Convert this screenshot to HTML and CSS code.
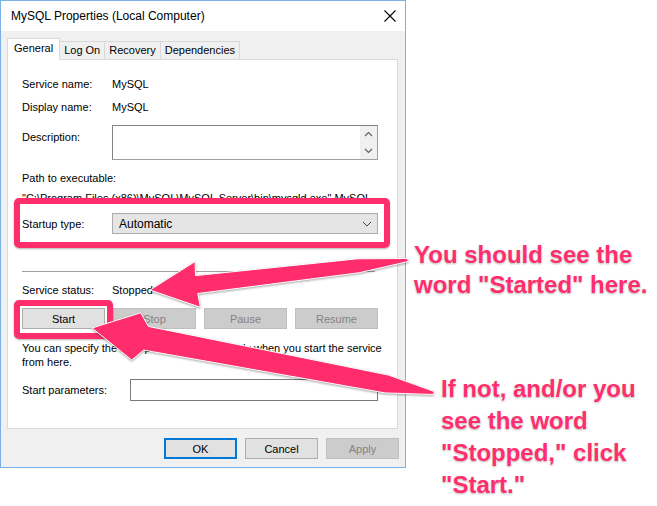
FILE: index.html
```html
<!DOCTYPE html>
<html lang="en">
<head>
<meta charset="utf-8">
<title>MySQL Properties (Local Computer)</title>
<link rel="stylesheet" href="styles.css">
</head>
<body>
<div class="stage">
  <!-- The service properties window -->
  <div class="dialog">
    <div class="titleBar">
      <span class="titleText">MySQL Properties (Local Computer)</span>
      <svg class="closeIcon" width="12" height="12" viewBox="0 0 12 12"><path d="M0.5 0.5L11.5 11.5M11.5 0.5L0.5 11.5" stroke="#000" stroke-width="1.1" fill="none"/></svg>
    </div>
    <div class="dialogBody">
      <div class="tabRow">
        <div class="tab tabSelected">General</div>
        <div class="tab">Log On</div>
        <div class="tab">Recovery</div>
        <div class="tab">Dependencies</div>
      </div>
      <div class="tabPanel">
        <div class="fieldRow"><span class="fieldLabel">Service name:</span><span>MySQL</span></div>
        <div class="fieldRow"><span class="fieldLabel">Display name:</span><span>MySQL</span></div>
        <div class="descRow">
          <span class="fieldLabel descLabel">Description:</span>
          <div class="descBox">
            <div class="scrollStrip">
              <svg width="9" height="6" viewBox="0 0 9 6"><path d="M1 5L4.5 1.5L8 5" stroke="#606060" stroke-width="1.2" fill="none"/></svg>
              <svg width="9" height="6" viewBox="0 0 9 6"><path d="M1 1L4.5 4.5L8 1" stroke="#606060" stroke-width="1.2" fill="none"/></svg>
            </div>
          </div>
        </div>
        <div class="pathLabel">Path to executable:</div>
        <div class="pathText">"C:\Program Files (x86)\MySQL\MySQL Server\bin\mysqld.exe" MySQL</div>
        <div class="startupRow">
          <span class="fieldLabel">Startup type:</span>
          <div class="comboBox">
            <span>Automatic</span>
            <svg width="10" height="6" viewBox="0 0 10 6"><path d="M1 1L5 5L9 1" stroke="#444" stroke-width="1" fill="none"/></svg>
          </div>
        </div>
        <div class="separator"></div>
        <div class="statusRow"><span class="fieldLabel">Service status:</span><span>Stopped</span></div>
        <div class="controlButtons">
          <div class="winButton">Start</div>
          <div class="winButton disabled">Stop</div>
          <div class="winButton disabled">Pause</div>
          <div class="winButton disabled">Resume</div>
        </div>
        <div class="noteText">You can specify the start parameters that apply when you start the service<br>from here.</div>
        <div class="paramRow">
          <span class="paramLabel">Start parameters:</span>
          <div class="paramInput"></div>
        </div>
      </div>
      <div class="dialogButtons">
        <div class="winButton dlgButton defaultButton">OK</div>
        <div class="winButton dlgButton">Cancel</div>
        <div class="winButton dlgButton disabled">Apply</div>
      </div>
    </div>
  </div>

  <!-- Annotations drawn on top of the screenshot -->
  <div class="highlight startupHighlight"></div>
  <div class="highlight startHighlight"></div>
  <svg class="arrows" width="657" height="506" viewBox="0 0 657 506">
    <path d="M150 290L195 261.6L195.6 275.6L357.8 258.8L407.8 258.5L408.2 261.5L359.4 272.7L197.8 293.5L200.4 307.3Z"/>
    <path d="M92 328L140.7 312.8L148.3 326.4L388.7 375.1L434.2 391.5L433.6 394.5L385 392.9L143.8 350.1L131.7 360Z"/>
  </svg>
  <div class="callout calloutTop">You should see the<br>word "Started" here.</div>
  <div class="callout calloutBottom">If not, and/or you<br>see the word<br>"Stopped," click<br>"Start."</div>
</div>
</body>
</html>
```

FILE: styles.css
```css
  body {
    margin: 0;
    background-color: #fff;
    font-family: "Liberation Sans", Arial, sans-serif;
    font-size: 11px;
    color: #000;
  }
  .stage {
    position: relative;
    width: 657px;
    height: 506px;
    overflow: hidden;
  }
  .dialog {
    width: 406px;
    height: 468px;
    box-sizing: border-box;
    border: 1px solid #7ab1e7;
    background-color: #f0f0f0;
    display: flex;
    flex-direction: column;
  }
  .titleBar {
    height: 30px;
    background-color: #fff;
    display: flex;
    align-items: center;
    justify-content: space-between;
    padding: 0 9px 0 10px;
  }
  .titleText {
    font-size: 12px;
  }
  .dialogBody {
    padding: 7px 7px 0 6px;
  }
  .tabRow {
    display: flex;
    align-items: flex-end;
  }
  .tab {
    box-sizing: border-box;
    height: 18px;
    padding: 1px 4px 0;
    line-height: 14px;
    border: 1px solid #d9d9d9;
    border-bottom: none;
    margin-left: -1px;
    background-color: #f0f0f0;
  }
  .tabSelected {
    height: 22px;
    padding: 2px 6px 0;
    margin-left: 0;
    margin-bottom: -1px;
    background-color: #fff;
    position: relative;
    z-index: 1;
  }
  .tabPanel {
    background-color: #fff;
    border: 1px solid #d9d9d9;
    padding: 12px 0 27px 14px;
  }
  .fieldRow {
    display: flex;
    align-items: center;
    height: 23px;
  }
  .fieldLabel {
    width: 90px;
    flex: none;
    line-height: 14px;
  }
  .descRow {
    display: flex;
    align-items: flex-start;
    margin-top: 7px;
  }
  .descLabel {
    padding-top: 5px;
  }
  .descBox {
    width: 266px;
    height: 35px;
    box-sizing: border-box;
    border: 1px solid #a0a0a0;
    border-left-color: #828282;
    border-top-color: #828282;
    display: flex;
    justify-content: flex-end;
  }
  .scrollStrip {
    width: 17px;
    background-color: #f0f0f0;
    display: flex;
    flex-direction: column;
    align-items: center;
    justify-content: space-between;
    padding: 5px 0 5px;
  }
  .pathLabel {
    margin-top: 11px;
    line-height: 14px;
  }
  .pathText {
    margin-top: 6px;
    line-height: 14px;
    width: 356px;
    white-space: nowrap;
    overflow: hidden;
  }
  .startupRow {
    display: flex;
    align-items: center;
    margin-top: 8px;
  }
  .comboBox {
    width: 266px;
    height: 21px;
    box-sizing: border-box;
    background-color: #e5e5e5;
    border: 1px solid #acacac;
    display: flex;
    align-items: center;
    justify-content: space-between;
    padding: 0 5px 0 6px;
    font-size: 12px;
  }
  .separator {
    margin-top: 37px;
    width: 353px;
    height: 1px;
    background-color: #a0a0a0;
  }
  .statusRow {
    display: flex;
    margin-top: 11px;
    line-height: 14px;
  }
  .controlButtons {
    display: grid;
    grid-template-columns: repeat(4, 83px);
    column-gap: 8px;
    margin-top: 11px;
  }
  .winButton {
    box-sizing: border-box;
    height: 21px;
    background-color: #e1e1e1;
    border: 1px solid #adadad;
    display: flex;
    align-items: center;
    justify-content: center;
  }
  .winButton.disabled {
    background-color: #cccccc;
    border-color: #bfbfbf;
    color: #838383;
  }
  .noteText {
    margin-top: 12px;
    line-height: 14px;
    white-space: nowrap;
  }
  .paramRow {
    display: flex;
    align-items: center;
    margin-top: 10px;
  }
  .paramLabel {
    width: 108px;
    flex: none;
  }
  .paramInput {
    width: 248px;
    height: 22px;
    box-sizing: border-box;
    border: 1px solid #7a7a7a;
  }
  .dialogButtons {
    display: flex;
    justify-content: flex-end;
    gap: 8px;
    margin-top: 9px;
    margin-right: -1px;
  }
  .dlgButton {
    width: 73px;
  }
  .defaultButton {
    border: 2px solid #0078d7;
  }

  /* annotation layer */
  .highlight {
    position: absolute;
    box-sizing: border-box;
    border: 6px solid #ff2d6b;
    border-radius: 5px;
    box-shadow: 0 1px 2px rgba(0, 0, 0, 0.3);
  }
  .startupHighlight {
    left: 14px;
    top: 198px;
    width: 376px;
    height: 50px;
  }
  .startHighlight {
    left: 14px;
    top: 300px;
    width: 99px;
    height: 39px;
  }
  .arrows {
    position: absolute;
    left: 0;
    top: 0;
    fill: #ff2d6b;
    stroke: #fff;
    stroke-width: 1;
    stroke-linejoin: round;
    filter: drop-shadow(0 1px 1px rgba(0, 0, 0, 0.35));
  }
  .callout {
    position: absolute;
    font-family: "Liberation Sans", Arial, sans-serif;
    font-weight: bold;
    font-size: 24px;
    color: #ff2d6b;
    white-space: nowrap;
    text-shadow: 0 0 2px #fff, 0 1px 2px rgba(0, 0, 0, 0.35);
  }
  .calloutTop {
    left: 414px;
    top: 240px;
    line-height: 30px;
  }
  .calloutBottom {
    left: 441px;
    top: 373px;
    line-height: 32px;
  }
```
